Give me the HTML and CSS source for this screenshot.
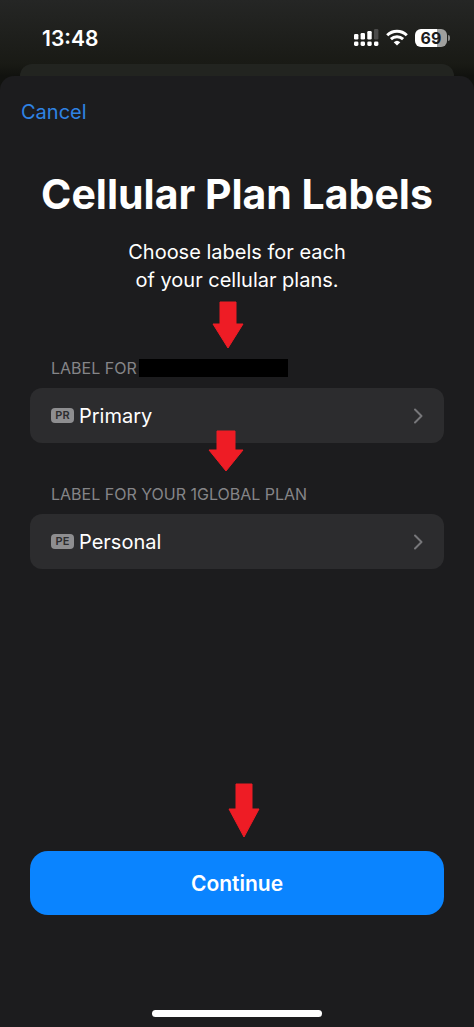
FILE: index.html
```html
<!DOCTYPE html>
<html lang="en">
<head>
    <meta charset="UTF-8">
    <meta name="viewport" content="width=device-width, initial-scale=1.0">
    <title>Cellular Plan Labels</title>
    <link rel="stylesheet" href="styles.css">
</head>
<body>
    <header class="status-bar">
        <time class="clock">13:48</time>
        <div class="status-icons">
            <svg width="26" height="18" viewBox="0 0 26 18" fill="#fff" aria-label="Signal">
                <rect x="1" y="5" width="4.400" height="5.400" rx="1.200"/>
                <rect x="7.600" y="4" width="4.400" height="6.400" rx="1.200"/>
                <rect x="14.300" y="2" width="4.400" height="8.400" rx="1.200"/>
                <rect x="21" y="0" width="4.400" height="10.400" rx="1.200" fill="#4b4b4a"/>
                <rect x="1" y="12.400" width="4.400" height="4.600" rx="1.400"/>
                <rect x="7.600" y="12.400" width="4.400" height="4.600" rx="1.400"/>
                <rect x="14.300" y="12.400" width="4.400" height="4.600" rx="1.400"/>
                <rect x="21" y="12.400" width="4.400" height="4.600" rx="1.400"/>
            </svg>
            <svg width="22" height="18" viewBox="0 0 22 18" fill="none" stroke="#fff" stroke-width="3" aria-label="Wi-Fi">
                <path d="M1.200 6.200a14 14 0 0 1 19.600 0"/>
                <path d="M4.900 10.200a8.800 8.800 0 0 1 12.200 0"/>
                <path d="M11 16.600l-3.300-3.400a4.800 4.800 0 0 1 6.600 0z" fill="#fff" stroke="none"/>
            </svg>
            <div class="battery"><span class="battery-level">69</span></div>
        </div>
    </header>

    <div class="back-card"></div>

    <main class="sheet">
        <nav class="nav"><button type="button" class="cancel">Cancel</button></nav>

        <h1>Cellular Plan Labels</h1>
        <div class="intro">
            <p>Choose labels for each<br>of your cellular plans.</p>
            <svg class="arrow arrow-intro" width="32" height="48" viewBox="0 0 32 48" aria-hidden="true">
                <path d="M8 1h16v22h7L16 47 1 23h7z"/>
            </svg>
        </div>

        <section class="plan">
            <h2 id="plan-1">LABEL FOR <span class="redacted"></span></h2>
            <button type="button" class="row" aria-describedby="plan-1">
                <span class="badge">PR</span>
                <span class="row-label">Primary</span>
                <svg class="chevron" width="10" height="16" viewBox="0 0 10 16" aria-hidden="true"><path d="M2 1.500 8.500 8 2 14.500"/></svg>
            </button>
            <svg class="arrow arrow-plan" width="36" height="42" viewBox="0 0 36 42" aria-hidden="true">
                <path d="M9 1h18v19h8L18 41 1 20h8z"/>
            </svg>
        </section>

        <section class="plan">
            <h2 id="plan-2">LABEL FOR YOUR 1GLOBAL PLAN</h2>
            <button type="button" class="row" aria-describedby="plan-2">
                <span class="badge">PE</span>
                <span class="row-label">Personal</span>
                <svg class="chevron" width="10" height="16" viewBox="0 0 10 16" aria-hidden="true"><path d="M2 1.500 8.500 8 2 14.500"/></svg>
            </button>
        </section>

        <footer class="footer">
            <svg class="arrow arrow-continue" width="32" height="55" viewBox="0 0 32 55" aria-hidden="true">
                <path d="M8 1h16v25h7L16 54 1 26h7z"/>
            </svg>
            <button type="button" class="continue">Continue</button>
        </footer>
        <div class="home-indicator"></div>
    </main>
</body>
</html>
```
FILE: styles.css
```css
* {
    box-sizing: border-box;
}
body {
    font-family: Inter, "Liberation Sans", sans-serif;
    margin: 0;
    min-height: 100vh;
    display: flex;
    flex-direction: column;
    color: #fff;
    background: #11120f linear-gradient(#252625, #191a15 64px, #11120f 76px) no-repeat;
}
button {
    font: inherit;
    color: inherit;
    border: 0;
    padding: 0;
    cursor: pointer;
}
h1, h2, p {
    margin: 0;
}

/* status bar */
.status-bar {
    display: flex;
    justify-content: space-between;
    align-items: center;
    height: 64px;
    padding: 12px 24px 0 42px;
}
.clock {
    font-size: 21px;
    font-weight: 600;
}
.status-icons {
    display: flex;
    align-items: center;
    gap: 7px;
}
.battery {
    position: relative;
    width: 32px;
    height: 18px;
    margin-right: 3px;
    border-radius: 6px;
    background: linear-gradient(90deg, #fff 69%, #a0a09e 69%);
    color: #1c1c1c;
    text-align: center;
}
.battery::after {
    content: "";
    position: absolute;
    top: 6px;
    right: -3px;
    width: 2px;
    height: 6px;
    border-radius: 0 2px 2px 0;
    background: #8a8a88;
}
.battery-level {
    display: block;
    font-size: 16px;
    font-weight: 700;
    line-height: 18px;
}

/* sheet */
.back-card {
    height: 12px;
    margin: 0 20px;
    border-radius: 12px 12px 0 0;
    background: #222420;
}
.sheet {
    flex: 1;
    display: flex;
    flex-direction: column;
    padding: 0 30px 10px;
    border-radius: 14px 14px 0 0;
    background: #1c1c1e;
}
.nav {
    margin: 20px -9px 0;
}
.cancel {
    background: none;
    color: #2f83e4;
    font-size: 20px;
    line-height: 32px;
}
h1 {
    margin: 42px -9px 0;
    font-size: 41px;
    font-weight: 700;
    line-height: 48px;
    text-align: center;
}
.intro {
    position: relative;
    margin-top: 20px;
    font-size: 20px;
    line-height: 28px;
    text-align: center;
}
.plan {
    position: relative;
    margin-top: 41px;
}
.intro + .plan {
    margin-top: 64px;
}
h2 {
    display: flex;
    align-items: center;
    gap: 2px;
    padding: 0 21px;
    color: #858588;
    font-size: 16px;
    font-weight: 400;
    line-height: 20px;
}
.redacted {
    width: 149px;
    height: 18px;
    background: #000;
}
.row {
    display: flex;
    align-items: center;
    width: 100%;
    height: 55px;
    margin-top: 10px;
    padding: 0 21px;
    border-radius: 12px;
    background: #2c2c2e;
}
.badge {
    width: 23px;
    margin-right: 5px;
    border-radius: 4px;
    background: #8e8e90;
    color: #2c2c2e;
    font-size: 11px;
    font-weight: 600;
    line-height: 15px;
    text-align: center;
}
.row-label {
    font-size: 20px;
}
.chevron {
    margin-left: auto;
    fill: none;
    stroke: #77777a;
    stroke-width: 2;
    stroke-linecap: round;
    stroke-linejoin: round;
}

/* red pointers laid over the screen */
.arrow {
    position: absolute;
    z-index: 1;
    fill: #ee1c25;
    stroke: #ee1c25;
    stroke-width: 1;
    stroke-linejoin: round;
}
.arrow-intro {
    top: 100%;
    left: calc(50% - 25px);
    margin-top: 7px;
}
.arrow-plan {
    top: 100%;
    left: calc(50% - 29px);
    margin-top: -13px;
}
.arrow-continue {
    bottom: 100%;
    left: calc(50% - 9px);
    margin-bottom: 13px;
}

.footer {
    position: relative;
    margin-top: auto;
}
.continue {
    width: 100%;
    height: 64px;
    border-radius: 18px;
    background: #0a84ff;
    font-size: 21px;
    font-weight: 600;
}
.home-indicator {
    width: 170px;
    height: 7px;
    margin: 95px auto 0;
    border-radius: 4px;
    background: #fff;
}
```
